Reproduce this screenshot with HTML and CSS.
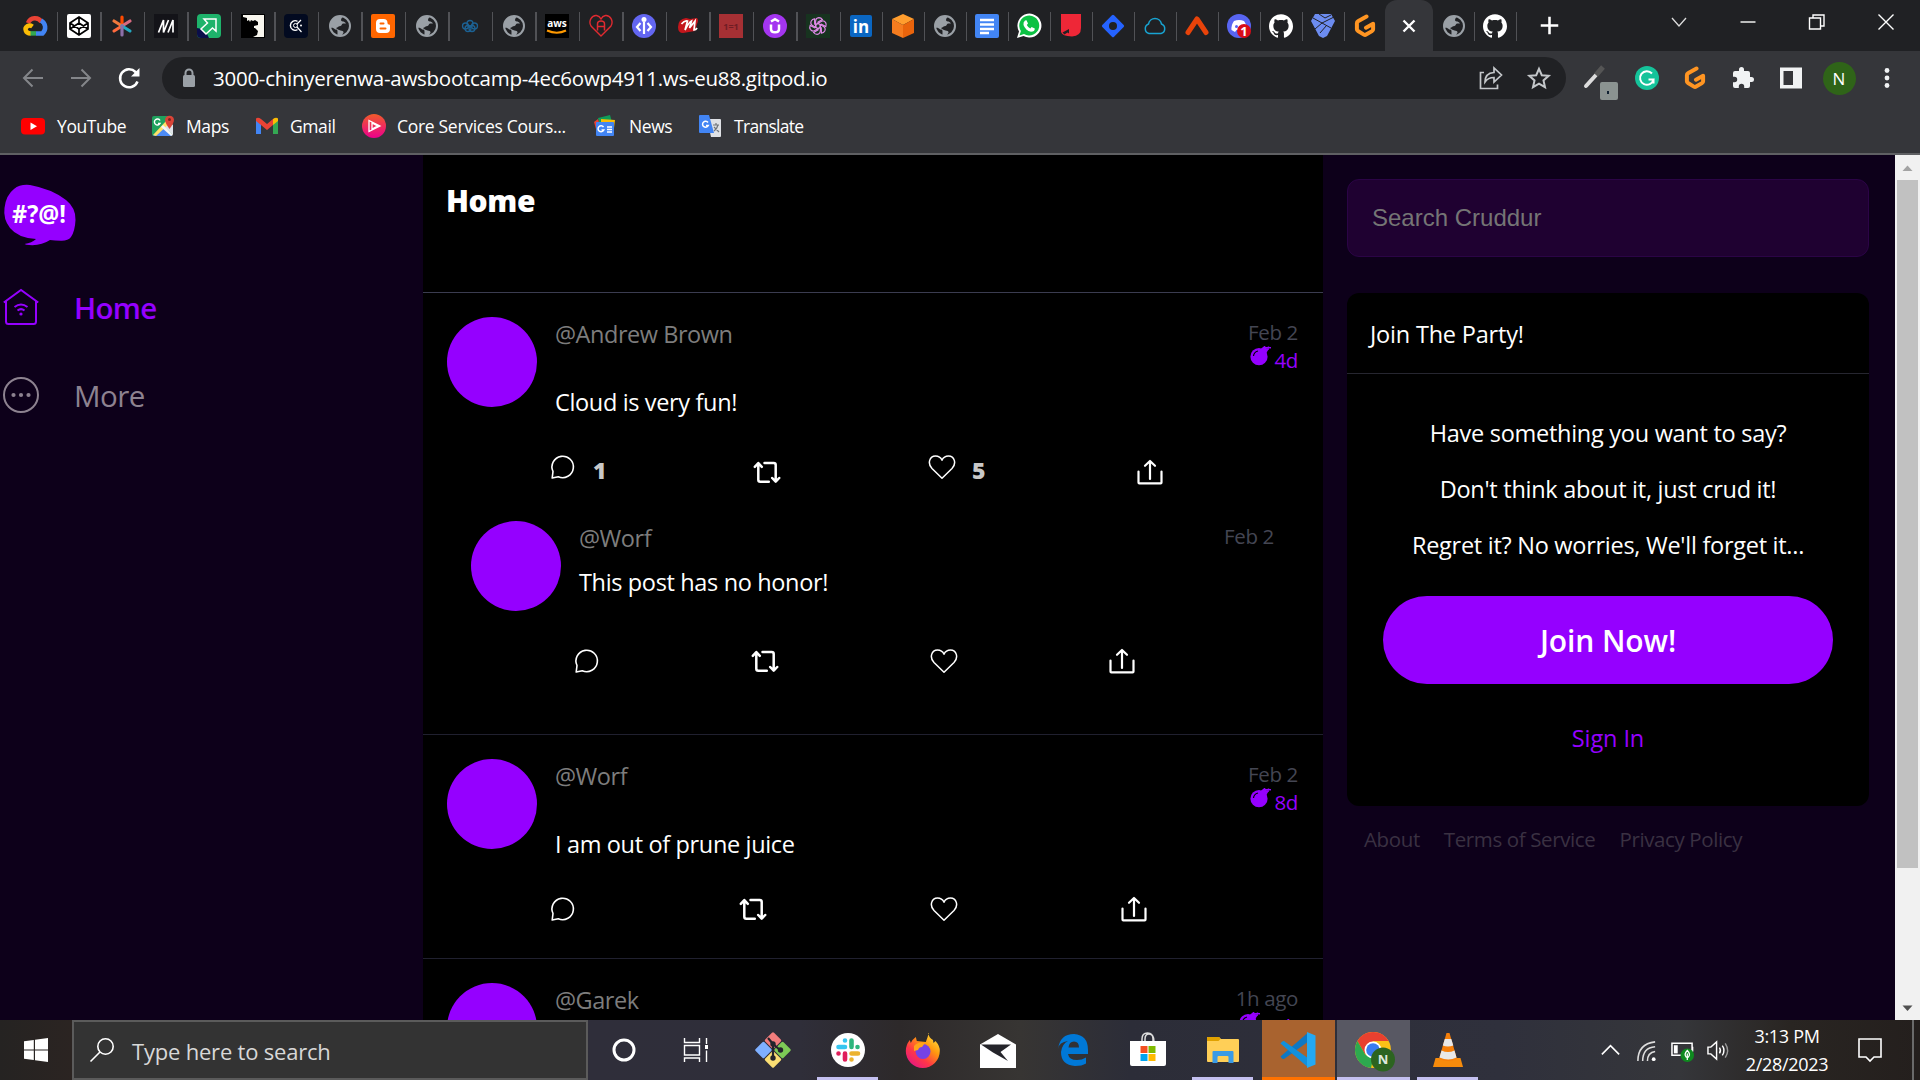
FILE: index.html
```html
<!DOCTYPE html>
<html lang="en">
<head>
<meta charset="utf-8">
<title>Cruddur</title>
<link rel="stylesheet" href="styles.css">
</head>
<body>
<svg class="defs" aria-hidden="true">
  <symbol id="globe" viewBox="0 0 24 24"><circle cx="12" cy="12" r="10" fill="#202124" stroke="#9aa0a6" stroke-width="2"/><path d="M12 2a10 10 0 0 0-9.800 12c2-.5 3.500 0 5 1.500 1.800 0 2.300.6 2.300 2v4.300c1.500.3 3.500.3 4.500 0 .2-2 1.500-2 1.500-3.500 0-1.300-1.500-1.500-3-1.800-2-.5-3.500-1.500-4.500-2.500 2-.4 2.500-2 4.500-2 1.500 0 1-2.500 2.500-2.500h3c-2-3-5-1.500-5-3.500 0-1.500 1.500-2.500 1.500-3.700z" fill="#9aa0a6"/></symbol>
  <symbol id="github" viewBox="0 0 24 24"><path fill="#fff" d="M12 .297c-6.630 0-12 5.373-12 12 0 5.303 3.438 9.800 8.205 11.385.6.113.82-.258.82-.577 0-.285-.01-1.040-.015-2.040-3.338.724-4.042-1.610-4.042-1.610C4.422 18.070 3.633 17.700 3.633 17.700c-1.087-.744.084-.729.084-.729 1.205.084 1.838 1.236 1.838 1.236 1.070 1.835 2.809 1.305 3.495.998.108-.776.417-1.305.76-1.605-2.665-.3-5.466-1.332-5.466-5.930 0-1.310.465-2.380 1.235-3.220-.135-.303-.54-1.523.105-3.176 0 0 1.005-.322 3.300 1.230.96-.267 1.980-.399 3-.405 1.020.006 2.040.138 3 .405 2.280-1.552 3.285-1.230 3.285-1.230.645 1.653.24 2.873.12 3.176.765.84 1.230 1.910 1.230 3.220 0 4.610-2.805 5.625-5.475 5.920.42.36.81 1.096.81 2.220 0 1.606-.015 2.896-.015 3.286 0 .315.21.69.825.57C20.565 22.092 24 17.592 24 12.297c0-6.627-5.373-12-12-12"/></symbol>
  <symbol id="gitpod" viewBox="0 0 24 24"><path d="M13.500 2.500 5 7.300a2.200 2.200 0 0 0-1.100 1.900v6a2.200 2.200 0 0 0 1.100 1.900l5.900 3.500a2.200 2.200 0 0 0 2.200 0l5.900-3.500a2.200 2.200 0 0 0 1.100-1.900V9.800L13 13.700" fill="none" stroke="#ff9522" stroke-width="4" stroke-linecap="round" stroke-linejoin="round"/></symbol>
  <symbol id="comment" viewBox="0 0 28 28"><path d="M3.200 25 4 18.500A10.700 10.700 0 1 1 9.300 23.700z" fill="none" stroke="#fff" stroke-width="1.600" stroke-linejoin="round"/></symbol>
  <symbol id="repost" viewBox="0 0 28 28"><path d="M1.800 8.800 5.300 5l3.500 3.800M5.300 5.500v16.200q0 2 2 2h8.500M11.500 5h9.200q2 0 2 2v16M19.200 20l3.500 3.700 3.500-3.700" fill="none" stroke="#fff" stroke-width="2.500" stroke-linecap="round" stroke-linejoin="round"/></symbol>
  <symbol id="heart" viewBox="0 0 28 28"><path d="M14 25.300 4 15.500C-.8 10.500 1.500 3 7.500 3c3.500 0 5.500 2 6.500 4.200C15 5 17 3 20.500 3c6 0 8.300 7.500 3.500 12.500z" fill="none" stroke="#fff" stroke-width="1.500" stroke-linejoin="round"/></symbol>
  <symbol id="share" viewBox="0 0 28 28"><path d="M2.500 13.500v11q0 .8.8.8h21.400q.8 0 .8-.8v-11M14 21V3M9 7.800 14 3l5 4.800" fill="none" stroke="#fff" stroke-width="2.200" stroke-linecap="round" stroke-linejoin="round"/></symbol>
  <symbol id="bomb" viewBox="0 0 22 20"><circle cx="9" cy="10.700" r="8.600" fill="#9500ff"/><path d="m12 2.800 2.500-2 3 2.800L15.500 7zM15 1.500l6 .3M16 1v3M18.500.5 18 4" fill="#9500ff" stroke="#9500ff" stroke-width="1.500"/><path d="M3.500 10q.5-4 4.500-5" fill="none" stroke="#000" stroke-width="1.200"/></symbol>
</svg>

<header class="chrome">
  <div class="tabs">
    <div class="tab tab-first"><svg viewBox="0 0 24 24"><path d="M5 9a7.500 7.500 0 0 1 13.500-1" fill="none" stroke="#ea4335" stroke-width="4.500"/><path d="M18 6.500a8 8 0 0 1 1.500 13H13" fill="none" stroke="#4285f4" stroke-width="4.500"/><path d="M7 19.400h6" stroke="#34a853" stroke-width="4.500"/><path d="M9.500 12.500C6 10 1.500 13 2.800 16.500 3.500 18.700 5 19.400 7.500 19.400" fill="none" stroke="#fbbc05" stroke-width="4.500"/></svg></div>
    <div class="tab wide"><svg viewBox="0 0 24 24"><rect width="24" height="24" rx="2" fill="#fff"/><path d="m12 3 9 6v6l-9 6-9-6V9zM3 9l9 6 9-6M3 15l9-6 9 6M12 3v6M12 15v6" fill="none" stroke="#000" stroke-width="1.700"/></svg></div>
    <div class="tab wide"><svg viewBox="0 0 24 24" stroke-width="3.200" stroke-linecap="round"><path d="M12 12V3" stroke="#ff4a00"/><path d="m12 12-8-5" stroke="#f0783c"/><path d="m12 12-8 5" stroke="#ff6a3d"/><path d="m12 12 8-5" stroke="#d86a80"/><path d="m12 12 8 5" stroke="#23a7c0"/><path d="M12 12v9" stroke="#8c6fa8"/></svg></div>
    <div class="tab wide"><svg viewBox="0 0 24 24"><rect width="24" height="24" fill="#131318"/><path d="M4.500 18.500 9.500 6v12.500L14.500 6M14 18.500 19 6v12.500" fill="none" stroke="#fff" stroke-width="1.700" stroke-linejoin="bevel"/></svg></div>
    <div class="tab wide"><svg viewBox="0 0 24 24"><rect width="24" height="24" rx="4" fill="#1eb36b"/><path d="M0 14q8 0 12 10H4q-4 0-4-4z" fill="#0b0e4a"/><path d="M7 5h12v12l-3.500-3L9 20l-5-5 6.500-6z" fill="#1eb36b" stroke="#fff" stroke-width="1.500"/></svg></div>
    <div class="tab wide"><svg viewBox="0 0 24 24"><rect width="24" height="24" fill="#000"/><path d="M2 1h21v22H12l4-2 1-4-3-3h-1v-2l4-1V8l-3-2-2 1-2-1-1 2-1-2-2 1V4L2 3z" fill="#f8f6ee"/></svg></div>
    <div class="tab wide"><svg viewBox="0 0 24 24"><rect width="24" height="24" rx="4" fill="#020a20"/><path d="M13.500 7.300a4.800 4.800 0 1 0 0 8.400" fill="none" stroke="#fff" stroke-width="1.400"/><circle cx="11.500" cy="11.500" r="2" fill="none" stroke="#fff"/><path d="m13 10 4-4M13 13l4.500 5" stroke="#fff" stroke-width="1.200"/><circle cx="17" cy="11.500" r="1" fill="#fff"/></svg></div>
    <div class="tab wide"><svg><use href="#globe"/></svg></div>
    <div class="tab wide"><svg viewBox="0 0 24 24"><rect width="24" height="24" rx="2" fill="#ff6600"/><path d="M9 5h3.500a4 4 0 0 1 4 4q0 1.500 1.500 1.500 1 0 1 1V15a4 4 0 0 1-4 4H9a4 4 0 0 1-4-4V9a4 4 0 0 1 4-4z" fill="#fff"/><path d="M9.500 9.500h3M9.500 14.500h5" stroke="#ff6600" stroke-width="2" stroke-linecap="round"/></svg></div>
    <div class="tab wide"><svg><use href="#globe"/></svg></div>
    <div class="tab wide"><svg viewBox="0 0 24 24" fill="none" stroke="#1c6193" stroke-width="1.300"><circle cx="12" cy="9.500" r="3"/><circle cx="7.500" cy="12" r="3"/><circle cx="16.500" cy="12" r="3"/><circle cx="10" cy="14.500" r="3"/><circle cx="14" cy="14.500" r="3"/></svg></div>
    <div class="tab wide"><svg><use href="#globe"/></svg></div>
    <div class="tab wide"><svg viewBox="0 0 24 24"><rect width="24" height="24" fill="#000"/><text x="12" y="13" text-anchor="middle" class="mark" font-size="10" fill="#fff">aws</text><path d="M2 16.500q10 4.500 19 0" fill="none" stroke="#ff9900" stroke-width="2"/></svg></div>
    <div class="tab wide"><svg viewBox="0 0 24 24"><path d="M12 22 2 12C-1 7 3 1 7.500 1.500 10 2 11 3 12 5c1-2 2-3 4.500-3.500C21 1 25 7 22 12z" fill="none" stroke="#e02a30" stroke-width="1.400"/><path d="M8.500 16.500V10q0-3 3.500-3t3.500 3v6.500M8.500 12.500h7" fill="none" stroke="#e02a30" stroke-width="1.500"/></svg></div>
    <div class="tab wide"><svg viewBox="0 0 24 24"><circle cx="12" cy="12" r="12" fill="#6366f1"/><circle cx="12" cy="5.500" r="2.500" fill="#fff"/><path d="M12 8v12M8.500 9l-3.500 4 3.500 4M15.500 9l3.500 4-3.500 4" fill="none" stroke="#fff" stroke-width="2.200"/></svg></div>
    <div class="tab wide"><svg viewBox="0 0 24 24"><path d="M2 13q0-8 8-9l4 1 7-1q2 2 0 6l-2 7-6 1-6 1q-5 0-5-6z" fill="#c4161c"/><path d="M5.500 10q3-4 6-3L9 16q4-8 6.500-9L13.500 14l5.500-7-1 9q2 0 3-2" fill="none" stroke="#fff" stroke-width="1.700"/></svg></div>
    <div class="tab wide"><svg viewBox="0 0 24 24"><rect width="24" height="24" fill="#a63034"/><text x="12" y="15.500" text-anchor="middle" class="mark" font-size="9" fill="#701d24">1=1</text></svg></div>
    <div class="tab wide"><svg viewBox="0 0 24 24"><circle cx="12" cy="12" r="12" fill="#a435f0"/><path d="M8 10.500V15q0 3.300 4 3.300t4-3.300v-4.500M8 7.500l4-2.300 4 2.300" fill="none" stroke="#fff" stroke-width="2.500"/></svg></div>
    <div class="tab wide"><svg viewBox="0 0 24 24"><rect width="24" height="24" fill="#17331f"/><g fill="none" stroke="#e08ae8" stroke-width="1.200"><path id="petal" d="M9.600 13.400V7.500q0-3.500 3.300-3.800 2.200 0 3.500 1.800L12 8.200v2.400"/><use href="#petal" transform="rotate(60 12 12)"/><use href="#petal" transform="rotate(120 12 12)"/><use href="#petal" transform="rotate(180 12 12)"/><use href="#petal" transform="rotate(240 12 12)"/><use href="#petal" transform="rotate(300 12 12)"/></g></svg></div>
    <div class="tab"><svg viewBox="0 0 24 24"><rect x="1" y="1" width="22" height="22" rx="2" fill="#0a66c2"/><text x="12" y="19" text-anchor="middle" class="mark" font-size="17" fill="#fff">in</text></svg></div>
    <div class="tab"><svg viewBox="0 0 24 24"><path d="m12 0 11 5-11 6L1 5z" fill="#ff9d2e"/><path d="m1 5 11 6v13L1 19z" fill="#f57c1f"/><path d="m23 5-11 6v13l11-5z" fill="#e9640c"/></svg></div>
    <div class="tab"><svg><use href="#globe"/></svg></div>
    <div class="tab"><svg viewBox="0 0 24 24"><rect width="24" height="24" rx="2" fill="#4285f4"/><path d="M5 6h14M5 10.500h14M5 15h14M5 19h9" stroke="#fff" stroke-width="2.300"/></svg></div>
    <div class="tab"><svg viewBox="0 0 24 24"><path d="M0 24 2 17.500A12 12 0 1 1 6.500 22z" fill="#fff"/><path d="m2.500 21.500 1.400-4.500A10 10 0 1 1 7 20z" fill="#0cc143"/><path d="m8 6.500 1.500-.3L11 9.500 9.800 11q1.200 2.500 3.500 3.400l1.300-1.400 3.200 1.500q0 3.300-3.800 3.300Q8.500 16.500 6.500 11 6 8 8 6.500z" fill="#fff"/></svg></div>
    <div class="tab"><svg viewBox="0 0 24 24"><path d="M2 0h20v14q0 8-9 8.500Q3 22 2 18z" fill="#ee2737"/><path d="M3.500 18.500 10 15v4.500l-1.500-1-3 2z" fill="#202124"/></svg></div>
    <div class="tab"><svg viewBox="0 0 24 24"><rect x="3.700" y="3.700" width="16.600" height="16.600" rx="1.500" transform="rotate(45 12 12)" fill="#2563ff"/><circle cx="12" cy="12" r="4" fill="#202124"/></svg></div>
    <div class="tab"><svg viewBox="0 0 24 24"><path d="M6 19.500a5 5 0 0 1-.5-9.500 6.600 6.600 0 0 1 13 0 5 5 0 0 1-.5 9.500z" fill="none" stroke="#18a4d2" stroke-width="1.500"/></svg></div>
    <div class="tab"><svg viewBox="0 0 24 24"><path d="M3 18.500 12 5l9 13.500" fill="none" stroke="#e8430a" stroke-width="5" stroke-linecap="round" stroke-linejoin="round"/></svg></div>
    <div class="tab"><svg viewBox="0 0 24 24"><circle cx="12" cy="12" r="12" fill="#5865f2"/><path d="M7 7q5-2 10 0 3 4 2.500 9l-3.500 2-1.500-2h-5L8 18l-3.500-2Q4 11 7 7z" fill="#fff"/><circle cx="9.500" cy="12.500" r="1.500" fill="#5865f2"/><circle cx="17" cy="17" r="7" fill="#d80c18"/><text x="17" y="22" text-anchor="middle" class="mark" font-size="13" fill="#fff">1</text></svg></div>
    <div class="tab"><svg><use href="#github"/></svg></div>
    <div class="tab"><svg viewBox="0 0 24 24"><path d="M4 0h16l4 7-8 15-4 2-4-2L0 7z" fill="#6c8cf0"/><path d="m2 4 9 5 12-6M11 9l-7 6M8 0l6 4 6-3M11 9l9 5M15.500 11.500 9 19" fill="none" stroke="#202124" stroke-width="1"/></svg></div>
    <div class="tab plain"><svg><use href="#gitpod"/></svg></div>
    <div class="tab active"><svg viewBox="0 0 24 24"><path d="m6.500 6.500 11 11m0-11-11 11" stroke="#fff" stroke-width="2.400"/></svg></div>
    <div class="tab late"><svg><use href="#globe"/></svg></div>
    <div class="tab"><svg><use href="#github"/></svg></div>
    <div class="new-tab"><svg viewBox="0 0 24 24"><path d="M12 2v20M2 12h20" stroke="#fff" stroke-width="2.900"/></svg></div>
    <div class="window-buttons">
      <svg viewBox="0 0 24 24"><path d="m5 8 7 8 7-8" fill="none" stroke="#ddd" stroke-width="1.300"/></svg>
      <svg viewBox="0 0 24 24"><path d="M4.500 12h15" stroke="#fff" stroke-width="1.400"/></svg>
      <svg viewBox="0 0 24 24"><path d="M4.500 8h11v11h-11zM8 8V5h11v11h-3.500" fill="none" stroke="#fff" stroke-width="1.400"/></svg>
      <svg viewBox="0 0 24 24"><path d="m4.500 4.500 15 15m0-15-15 15" stroke="#fff" stroke-width="1.400"/></svg>
    </div>
  </div>

  <div class="toolbar">
    <div class="tool"><svg viewBox="0 0 24 24"><path d="M22 12H3M11.500 3.500 3 12l8.500 8.500" fill="none" stroke="#84868a" stroke-width="2"/></svg></div>
    <div class="tool"><svg viewBox="0 0 24 24"><path d="M2 12h19M12.500 3.500 21 12l-8.500 8.500" fill="none" stroke="#84868a" stroke-width="2"/></svg></div>
    <div class="tool"><svg viewBox="0 0 24 24"><path d="M20.500 15.500A9 9 0 1 1 18.500 6l2 2" fill="none" stroke="#fff" stroke-width="2.500"/><path d="M22.500 2v8.500H14z" fill="#fff"/></svg></div>
    <div class="omnibox">
      <svg class="lock" viewBox="0 0 14 20"><rect x="1" y="7" width="12" height="12" rx="1.500" fill="#9aa0a6"/><path d="M3.500 8V5a3.500 3.500 0 0 1 7 0v3" fill="none" stroke="#9aa0a6" stroke-width="2"/></svg>
      <span class="url">3000-chinyerenwa-awsbootcamp-4ec6owp4911.ws-eu88.gitpod.io</span>
      <svg class="omni-icon" viewBox="0 0 24 24"><path d="M5 6.500H1.500v16h17v-4M6 16q0-9 9-9.500V2l7.500 7-7.500 7v-4.500q-6 0-9 4.500z" fill="none" stroke="#c4c7ca" stroke-width="1.700"/></svg>
      <svg class="omni-icon" viewBox="0 0 24 24"><path d="m12 2.800 2.800 6.400 6.900.6-5.200 4.600 1.500 6.800-6-3.600-6 3.600 1.500-6.800-5.200-4.600 6.900-.6z" fill="none" stroke="#c4c7ca" stroke-width="2"/></svg>
    </div>
    <div class="tool"><svg class="picker" viewBox="0 0 34 34"><path d="M4 20 14 9" stroke="#ddd" stroke-width="4" stroke-linecap="round"/><path d="m14 9 7-8" stroke="#555" stroke-width="5"/><rect x="18" y="16" width="18" height="18" rx="2" fill="#8b9391"/><rect x="25" y="25" width="2" height="3" fill="#123"/></svg></div>
    <div class="tool"><svg viewBox="0 0 24 24"><circle cx="12" cy="12" r="12" fill="#15c39a"/><path d="M17 7.500a6.800 6.800 0 1 0 1.500 6h-5M18.500 13v4.500" fill="none" stroke="#fff" stroke-width="2"/></svg></div>
    <div class="tool"><svg><use href="#gitpod"/></svg></div>
    <div class="tool"><svg viewBox="0 0 24 24"><path d="M20.500 11H19V7a2 2 0 0 0-2-2h-4V3.500a2.500 2.500 0 0 0-5 0V5H4a2 2 0 0 0-2 2v3.800h1.500a2.700 2.700 0 0 1 0 5.400H2V20a2 2 0 0 0 2 2h3.800v-1.500a2.700 2.700 0 0 1 5.400 0V22H17a2 2 0 0 0 2-2v-4h1.500a2.500 2.500 0 0 0 0-5z" fill="#f1f3f4"/></svg></div>
    <div class="tool"><svg viewBox="0 0 24 24"><path d="M1 1.500h22v21H1zM4.500 5v14H14V5z" fill="#f1f3f4" fill-rule="evenodd"/></svg></div>
    <div class="tool"><span class="profile">N</span></div>
    <div class="tool"><svg viewBox="0 0 24 24" fill="#f1f3f4"><circle cx="12" cy="4.500" r="2.400"/><circle cx="12" cy="12" r="2.400"/><circle cx="12" cy="19.500" r="2.400"/></svg></div>
  </div>

  <nav class="bookmarks">
    <span class="bookmark bm-youtube"><svg viewBox="0 0 24 24"><rect y="4" width="24" height="16.500" rx="4" fill="#f00"/><path d="m9.500 8.500 6.500 3.700-6.500 3.700z" fill="#fff"/></svg>YouTube</span>
    <span class="bookmark bm-maps"><svg viewBox="0 0 24 24"><rect x="1" y="2" width="20" height="20" rx="2" fill="#1fa15d"/><path d="m2 22 10-10 9 10z" fill="#4c8bf5"/><path d="m12 12 10 9V11l-5-4z" fill="#dfe3e8"/><path d="M2 21 16 6l3 3L5 22z" fill="#ffe168"/><path d="m12 11 10 10-2 1-10-9z" fill="#f5f5f5"/><path d="M9 6.500a3 3 0 1 0 0 3H7" fill="none" stroke="#fff" stroke-width="1.400"/><path d="M18.500 15Q14 9 14 5.500a4.600 4.600 0 0 1 9 0Q23 9 18.500 15z" fill="#db4437"/><circle cx="18.500" cy="5.500" r="1.500" fill="#7b231e"/></svg>Maps</span>
    <span class="bookmark bm-gmail"><svg viewBox="0 0 24 24"><path d="M1 6v14h5V10z" fill="#4285f4"/><path d="M18 10v10h5V6z" fill="#34a853"/><path d="M1 4.500Q3 3 6 5l6 5 6-5v6l-6 5-6-5-5-4z" fill="#ea4335"/><path d="M18 5q3-2 5-.5V7l-5 4z" fill="#fbbc04"/></svg>Gmail</span>
    <span class="bookmark bm-core"><svg viewBox="0 0 24 24"><defs><linearGradient id="plural" x2="0" y2="1"><stop stop-color="#f15b2a"/><stop offset="1" stop-color="#ec008c"/></linearGradient></defs><circle cx="12" cy="12" r="12" fill="url(#plural)"/><path d="m7 6.500 11 5.500-11 5.500zM10 9l5.500 3-5.500 3z" fill="none" stroke="#fff" stroke-width="1.300"/></svg>Core Services Cours...</span>
    <span class="bookmark bm-news"><svg viewBox="0 0 24 24"><path d="M5 4 17 1l2 7H6z" fill="#0f9d58"/><path d="m1 8 4-3 3 10H3z" fill="#ea4335"/><path d="m8 5 14 1-1 8H8z" fill="#fbbc04"/><rect x="3" y="8" width="18" height="14" rx="1" fill="#4285f4"/><path d="M10.500 13a3 3 0 1 0 .3 3H8.500M14 13h5M14 15.500h5M14 18h5" fill="none" stroke="#fff" stroke-width="1.500"/></svg>News</span>
    <span class="bookmark bm-translate"><svg viewBox="0 0 24 24"><path d="M9 5h13q1 0 1 1v16q0 1-1 1H13z" fill="#dfe1e5"/><path d="M1 2q0-1 1-1h9l5 18H2q-1 0-1-1z" fill="#4285f4"/><path d="M10 8.500a3 3 0 1 0 .3 3H8" fill="none" stroke="#fff" stroke-width="1.500"/><path d="M15 11h6M18 9v2M20 11q-1 4-4 6M16 13l5 5" fill="none" stroke="#70757a" stroke-width="1.200"/></svg>Translate</span>
  </nav>
</header>

<main class="app">
  <aside class="sidebar">
    <svg class="brand" viewBox="0 0 72 61"><path d="M26 0Q48 4 62 15q10 8 9.500 20-.5 11-4.500 17-3 4-10 3.800-6-.3-11-.8-9 6-21 5-3 0-4.500-1Q28 58 32 54 14 53 6 43-1 34 .5 23 2 10 10 4q6-5 16-4z" fill="#9500ff"/><text x="35" y="38" text-anchor="middle" textLength="54" lengthAdjust="spacingAndGlyphs" class="swear">#?@!</text></svg>
    <a class="nav-item current"><svg viewBox="0 0 36 36"><path d="M.8 13.500 18 1l17.200 12.500M3 12v20.500Q3 35 5.500 35h25q2.500 0 2.500-2.500V12" fill="none" stroke="#9500ff" stroke-width="2"/><path d="M11.500 18q6.500-5 13 0M14.500 21.500q3.500-2.800 7 0" fill="none" stroke="#9500ff" stroke-width="2"/><circle cx="18" cy="25" r="1.600" fill="#9500ff"/></svg>Home</a>
    <a class="nav-item"><svg viewBox="0 0 36 36"><circle cx="18" cy="18" r="17" fill="none" stroke="#8d8290" stroke-width="2"/><g fill="#8d8290"><circle cx="10.500" cy="18" r="2.100"/><circle cx="18" cy="18" r="2.100"/><circle cx="25.500" cy="18" r="2.100"/></g></svg>More</a>
  </aside>

  <section class="feed">
    <h1 class="feed-title">Home</h1>

    <article class="post with-reply">
      <div class="entry">
        <div class="avatar"></div>
        <div class="body">
          <div class="head"><span class="handle">@Andrew Brown</span><div class="times"><span>Feb 2</span><span class="expires"><svg><use href="#bomb"/></svg>4d</span></div></div>
          <p class="message">Cloud is very fun!</p>
          <div class="actions counted"><span><svg><use href="#comment"/></svg><b>1</b></span><span class="low"><svg><use href="#repost"/></svg></span><span><svg><use href="#heart"/></svg><b>5</b></span><span class="low"><svg><use href="#share"/></svg></span></div>
        </div>
      </div>
      <div class="entry reply">
        <div class="avatar"></div>
        <div class="body">
          <div class="head"><span class="handle">@Worf</span><div class="times"><span>Feb 2</span></div></div>
          <p class="message">This post has no honor!</p>
          <div class="actions"><span><svg><use href="#comment"/></svg></span><span><svg><use href="#repost"/></svg></span><span><svg><use href="#heart"/></svg></span><span><svg><use href="#share"/></svg></span></div>
        </div>
      </div>
    </article>

    <article class="post">
      <div class="entry">
        <div class="avatar"></div>
        <div class="body">
          <div class="head"><span class="handle">@Worf</span><div class="times"><span>Feb 2</span><span class="expires"><svg><use href="#bomb"/></svg>8d</span></div></div>
          <p class="message">I am out of prune juice</p>
          <div class="actions"><span><svg><use href="#comment"/></svg></span><span><svg><use href="#repost"/></svg></span><span><svg><use href="#heart"/></svg></span><span><svg><use href="#share"/></svg></span></div>
        </div>
      </div>
    </article>

    <article class="post">
      <div class="entry">
        <div class="avatar"></div>
        <div class="body">
          <div class="head"><span class="handle">@Garek</span><div class="times"><span>1h ago</span><span class="expires"><svg><use href="#bomb"/></svg>11h</span></div></div>
        </div>
      </div>
    </article>
  </section>

  <aside class="rail">
    <input class="search" type="text" placeholder="Search Cruddur">
    <div class="join">
      <h2 class="join-title">Join The Party!</h2>
      <div class="join-body">
        <p>Have something you want to say?</p>
        <p>Don't think about it, just crud it!</p>
        <p>Regret it? No worries, We'll forget it...</p>
        <a class="join-button">Join Now!</a>
        <a class="sign-in">Sign In</a>
      </div>
    </div>
    <footer class="links"><a>About</a><a>Terms of Service</a><a>Privacy Policy</a></footer>
  </aside>

  <div class="scrollbar">
    <svg viewBox="0 0 25 25"><path d="M7.500 16 12.500 10.500 17.500 16z" fill="#a3a3a3"/></svg>
    <div class="thumb"></div>
    <svg viewBox="0 0 25 25"><path d="M7.500 10.500 12.500 16 17.500 10.500z" fill="#505050"/></svg>
  </div>
</main>

<footer class="taskbar">
  <div class="start"><svg viewBox="0 0 24 24"><path d="M0 3.300 9.800 2v9.500H0zM11 1.800 24 0v11.500H11zM0 12.600h9.800V22L0 20.700zM11 12.600h13V24l-13-1.800z" fill="#fff"/></svg></div>
  <div class="task-search"><svg viewBox="0 0 24 24"><circle cx="15.500" cy="8.500" r="7.700" fill="none" stroke="#fff" stroke-width="1.600"/><path d="M10 14 .5 23.500" stroke="#fff" stroke-width="1.600"/></svg><span>Type here to search</span></div>
  <div class="tool-cell"><svg viewBox="0 0 24 24"><circle cx="12" cy="12" r="10" fill="none" stroke="#fff" stroke-width="3"/></svg></div>
  <div class="tool-cell"><svg viewBox="0 0 24 24"><path d="M.5 0v4.500h15V0M.5 7.500h15v9.500H.500zM.5 24v-4h15v4M22.500 0v6M22.500 12.500V24" fill="none" stroke="#fff" stroke-width="1.400"/><rect x="21" y="7" width="3" height="4" fill="#fff"/></svg></div>
  <div class="apps">
    <div class="app-cell"><svg viewBox="0 0 36 36"><g transform="rotate(45 18 18)"><rect x="5" y="5" width="12.500" height="12.500" rx="1.500" fill="#f27d7d"/><rect x="18.500" y="5" width="12.500" height="12.500" rx="1.500" fill="#7dcb56"/><rect x="18.500" y="18.500" width="12.500" height="12.500" rx="1.500" fill="#fbdf74"/><rect x="5" y="18.500" width="12.500" height="12.500" rx="1.500" fill="#7fb0ff"/></g><path d="M13 6l5 6v14M18 12l7 6" fill="none" stroke="#24242c" stroke-width="2.200"/><circle cx="18" cy="12" r="2.700" fill="#24242c"/><circle cx="18" cy="26" r="2.700" fill="#24242c"/><circle cx="25.500" cy="18" r="2.700" fill="#24242c"/></svg></div>
    <div class="app-cell running"><svg viewBox="0 0 36 36"><circle cx="18" cy="18" r="17" fill="#fff"/><g stroke-width="4.600" stroke-linecap="round"><path d="M15 8.500v0M8.500 15H15" stroke="#36c5f0"/><path d="M21.500 8.500V15M27.500 15v0" stroke="#2eb67d"/><path d="M21.500 21.500H28M21.500 27.500v0" stroke="#ecb22e"/><path d="M15 21.500v6M8.500 21.500v0" stroke="#e01e5a"/></g></svg></div>
    <div class="app-cell"><svg viewBox="0 0 36 36"><defs><linearGradient id="fox" x1="1" x2=".2" y2="1"><stop stop-color="#fff44f"/><stop offset=".4" stop-color="#ff980e"/><stop offset=".7" stop-color="#ff3647"/><stop offset="1" stop-color="#e31587"/></linearGradient></defs><path d="M23 1q1 5 5 7l.5 3 2-2q4.500 5 4.300 10a17 17 0 0 1-34 0q0-6 4-11l1 3q2-4 5-6l1 4 9 1q2-5 3-9z" fill="url(#fox)"/><circle cx="18" cy="19.500" r="7.500" fill="#7542e5"/><path d="M9 14q4-5 11-3l-3 4q-3 0-4 3l-4 1z" fill="#ffa31a"/></svg></div>
    <div class="app-cell"><svg viewBox="0 0 36 36"><path d="M0 12.500 18 2l18 10.500V36H0z" fill="#fff"/><path d="M1 12.500h30L20.500 20 28 29l-15-8.500z" fill="#25252b"/></svg></div>
    <div class="app-cell"><svg viewBox="0 0 36 36"><path d="M3 17Q5 2 19 2q14 1 14 16v4H13q1 6 9 6 5 0 9-2.500v6Q27 34 20 34 6 33 6 20q1-8 7-11-9 1-10 8zm10.500-1.500H24q0-6-5-6t-5.500 6z" fill="#0078d7" fill-rule="evenodd"/></svg></div>
    <div class="app-cell"><svg viewBox="0 0 36 36"><path d="M12 10V7q0-6 5.500-6T23 7v3M15 10V7q0-5 4-5 5 0 5 8" fill="none" stroke="#ddd" stroke-width="1.500"/><path d="M0 9h36v23q0 2-2 2H2q-2 0-2-2z" fill="#fff"/><path d="M10.500 14h7v7h-7z" fill="#f25022"/><path d="M18.500 14h7v7h-7z" fill="#7fba00"/><path d="M10.500 22h7v7h-7z" fill="#00a4ef"/><path d="M18.500 22h7v7h-7z" fill="#ffb900"/></svg></div>
    <div class="app-cell running"><svg viewBox="0 0 36 36"><path d="M2 6q0-1 1-1h11l2 2h17q1 0 1 1v21q0 1-1 1H3q-1 0-1-1z" fill="#ffcf57"/><path d="M2 6q0-1 1-1h11l1.500 2-2 2H2z" fill="#e0a100"/><path d="M7.500 31V20q0-1 1-1h19q1 0 1 1v11h-5v-6q0-1-1-1h-9q-1 0-1 1v6z" fill="#3a9be6"/></svg></div>
    <div class="app-cell alert"><svg viewBox="0 0 36 36"><path d="m27 0 8.500 3.500v29L27 36z" fill="#24a9f2"/><path d="M27 1.500v9L4 27q-2 .5-3.500-2.500z" fill="#0e78c4"/><path d="M27 34.500v-9L4 9Q2 8.500.5 11.500z" fill="#1390dc"/></svg></div>
    <div class="app-cell running focused"><svg viewBox="0 0 40 40"><circle cx="18" cy="18" r="18" fill="#fbc116"/><path d="M2.400 9a18 18 0 0 1 31.200 0H18L10.200 22.500z" fill="#e8402f"/><path d="M2.400 9 10.200 22.500 18 27l-2 9A18 18 0 0 1 2.400 9z" fill="#2da94f"/><circle cx="18" cy="18" r="8.500" fill="#fff"/><circle cx="18" cy="18" r="6.800" fill="#3a7cf0"/><circle cx="28" cy="27.500" r="12" fill="#2c6420"/><text x="28" y="32" text-anchor="middle" font-size="13" class="mark" fill="#dfe8dc">N</text></svg></div>
    <div class="app-cell running"><svg viewBox="0 0 36 36"><path d="M5.500 26h25L33 35H3z" fill="#f68b0c"/><path d="m16.500 1h3l7.500 26q-9 4-18 0z" fill="#f57f0a"/><path d="m14.800 7-2 6.500q5 2 10.500 0L21.300 7zM11.500 18.500l-2 7q9 4 17 0l-2-7q-6.500 3-13 0z" fill="#e8e8e8"/></svg></div>
  </div>
  <div class="tray">
    <div class="tray-cell"><svg viewBox="0 0 24 24"><path d="m3 16 9-9 9 9" fill="none" stroke="#fff" stroke-width="1.700"/></svg></div>
    <div class="tray-cell"><svg viewBox="0 0 24 24" fill="none" stroke="#ddd" stroke-width="1.600"><path d="M3 23Q3 5 21 3M8 23Q8 9 21 8M13 23q0-9 8-10"/><circle cx="19.500" cy="21" r="2" fill="#fff" stroke="none"/></svg></div>
    <div class="tray-cell"><svg viewBox="0 0 24 24"><path d="M1 4.500h21V17H1zM22.500 8v5" fill="none" stroke="#fff" stroke-width="1.600"/><path d="M3 6.500h4V15H3z" fill="#fff"/><circle cx="17" cy="17" r="7" fill="#0f8a1f"/><path d="M17 12q-4 4-1 7h2q3-3-1-7zM17 15v7" fill="none" stroke="#fff" stroke-width="1.300"/></svg></div>
    <div class="tray-cell"><svg viewBox="0 0 24 24" fill="none" stroke="#fff" stroke-width="1.500"><path d="M1 8.500h3L10 3v18l-6-5.500H1z"/><path d="M13 9q2 3 0 6M16 7q3.500 5 0 10"/><path d="M19 4.500q5 7.500 0 15" stroke="#999"/></svg></div>
    <div class="clock"><span>3:13 PM</span><span>2/28/2023</span></div>
    <div class="notice"><svg viewBox="0 0 24 24"><path d="M1 1h22v18h-7l-4 4-4-4H1z" fill="none" stroke="#fff" stroke-width="1.600"/></svg></div>
    <div class="peek"></div>
  </div>
</footer>
</body>
</html>
```
FILE: styles.css
```css
* { box-sizing: border-box; }

html, body {
  margin: 0;
  width: 1920px;
  height: 1080px;
  overflow: hidden;
}

body {
  display: flex;
  flex-direction: column;
  background: #000;
  font-family: "Open Sans", "Noto Sans", sans-serif;
  color: #fff;
}

svg { display: block; flex: none; overflow: visible; }
p, h1, h2 { margin: 0; font-weight: 400; }
.defs { display: none; }
.mark { font-family: "Open Sans", sans-serif; font-weight: 700; }

/* Browser chrome */
.chrome {
  flex: none;
  height: 155px;
  background: #35363a;
  border-bottom: 2px solid #5f6063;
}

.tabs {
  display: flex;
  height: 51px;
  background: #202124;
}

.tab {
  position: relative;
  display: flex;
  align-items: center;
  justify-content: center;
  flex: none;
  width: 42px;
}
.tab svg { width: 24px; height: 24px; }
.tab::after {
  content: "";
  position: absolute;
  right: -1px;
  top: 12px;
  width: 1.5px;
  height: 29px;
  background: #515256;
}
.tab.wide { width: 43.5px; }
.tab-first { width: 57px; padding-left: 13px; }
.tab.late { width: 41px; }
.tab.plain::after, .tab.active::after { display: none; }
.tab.active {
  width: 48px;
  margin-left: -1px;
  background: #35363a;
  border-radius: 12px 12px 0 0;
}

.new-tab { width: 66px; display: flex; align-items: center; justify-content: center; }
.new-tab svg { width: 21px; height: 21px; }

.window-buttons {
  display: flex;
  gap: 45px;
  margin-left: auto;
  padding: 10px 22px 0 0;
}
.window-buttons svg { width: 24px; height: 24px; }

.toolbar {
  display: flex;
  align-items: center;
  height: 54px;
  padding: 0 9px;
}
.tool { width: 48px; display: flex; justify-content: center; flex: none; }
.tool svg { width: 24px; height: 24px; }
.tool .picker { width: 34px; height: 34px; margin-top: 10px; }

.omnibox {
  display: flex;
  align-items: center;
  flex: 1;
  height: 42px;
  margin: 0 9px;
  padding: 0 15px 0 20px;
  background: #202124;
  border-radius: 21px;
}
.lock { width: 14px; height: 20px; }
.url { flex: 1; margin-left: 17px; font-size: 20.5px; letter-spacing: -0.26px; }
.omni-icon { width: 24px; height: 24px; margin-left: 24px; }

.profile {
  width: 33px;
  height: 33px;
  border-radius: 50%;
  background: #2f6418;
  text-align: center;
  font-size: 17px;
  line-height: 33px;
}

.bookmarks {
  display: flex;
  align-items: center;
  height: 41px;
  font-size: 17.5px;
  letter-spacing: -0.4px;
}
.bookmark { display: flex; align-items: center; flex: none; gap: 12px; }
.bookmark svg { width: 24px; height: 24px; }
.bm-youtube { width: 130px; margin-left: 21px; }
.bm-maps { width: 104px; gap: 11px; }
.bm-gmail { width: 107px; gap: 11px; }
.bm-core { width: 231px; gap: 11px; letter-spacing: -0.3px; }
.bm-news { width: 105px; }
.bm-translate { letter-spacing: -0.7px; }

/* Page */
.app { display: flex; height: 865px; background: #0d001a; }

.sidebar { width: 423px; padding: 30px 0 0 4px; }
.brand { width: 72px; height: 61px; }
.swear { font: 700 25px "Open Sans", sans-serif; fill: #fff; }

.nav-item {
  display: flex;
  align-items: center;
  gap: 35px;
  height: 88px;
  margin-left: -1px;
  font-size: 29.5px;
  letter-spacing: -0.5px;
  color: #8d8290;
}
.nav-item svg { width: 36px; height: 36px; }
.current { margin-top: 17px; font-weight: 600; letter-spacing: -0.7px; color: #9500ff; }

.feed { width: 900px; background: #000; overflow: hidden; }
.feed-title {
  height: 138px;
  padding: 25px 23px;
  border-bottom: 1px solid #3b3c50;
  font-size: 30px;
  font-weight: 800;
  line-height: 42px;
  letter-spacing: -0.4px;
}

.post { padding: 24px 24px 35px; border-bottom: 1px solid #20202f; }
.with-reply { padding-bottom: 59px; }
.entry { display: flex; gap: 18px; }
.avatar { flex: none; width: 90px; height: 90px; border-radius: 50%; background: #9500ff; }
.body { flex: 1; }

.head { display: flex; justify-content: space-between; height: 69px; }
.handle { font-size: 23.5px; line-height: 35px; letter-spacing: -0.45px; color: #7d7d7d; }
.times {
  display: flex;
  flex-direction: column;
  align-items: flex-end;
  padding: 1px 1px 0 0;
  font-size: 20.5px;
  line-height: 28px;
  letter-spacing: -0.35px;
  color: #444653;
}
.expires { display: flex; gap: 2px; color: #9500ff; }
.expires svg { width: 22px; height: 20px; }

.message { font-size: 23.5px; line-height: 32px; letter-spacing: -0.35px; }

.actions {
  display: grid;
  grid-template-columns: 190px 191px 190px 28px;
  margin: 34.5px 0 0.5px -6.5px;
}
.actions span { display: flex; }
.actions svg { width: 28px; height: 28px; }
.actions.counted { grid-template-columns: 204px 175px 208px 28px; }
.actions b {
  margin: 2px 0 0 16.5px;
  color: #c8c8c8;
  font-size: 23px;
  font-weight: 800;
  line-height: 31px;
}
.actions .low { padding-top: 5px; }

.reply { margin-top: 35px; padding: 0 24px; }
.reply .head { height: 45px; }
.reply .actions { grid-template-columns: 178px 179px 178px 28px; margin-top: 48.5px; }

.rail { width: 572px; padding: 24px 26px 0 24px; }
.search {
  display: block;
  width: 522px;
  height: 78px;
  padding: 0 24px;
  border: 1px solid #2b0446;
  border-radius: 12px;
  background: #1f0131;
  font: 24px "Liberation Sans", sans-serif;
}
.search::placeholder { color: #757575; }

.join { height: 513px; margin-top: 36px; border-radius: 12px; background: #000; }
.join-title {
  height: 81px;
  padding: 24px 23px;
  border-bottom: 1px solid #262630;
  font-size: 23.5px;
  line-height: 34px;
  letter-spacing: -0.2px;
}
.join-body { padding: 31px 36px 0; text-align: center; font-size: 23.5px; letter-spacing: -0.27px; }
.join-body p { line-height: 56px; }
.join-button {
  display: block;
  height: 88px;
  margin-top: 23px;
  border-radius: 45px;
  background: #9500ff;
  font-size: 30px;
  font-weight: 600;
  line-height: 90px;
  letter-spacing: -0.1px;
}
.sign-in { display: block; margin-top: 38px; color: #9500ff; line-height: 32px; letter-spacing: -0.1px; }

.links { display: flex; gap: 24px; padding: 19px 17px; color: #3a3142; font-size: 20.5px; line-height: 28px; letter-spacing: -0.38px; }

.scrollbar { width: 25px; background: #f1f1f1; display: flex; flex-direction: column; }
.scrollbar svg { width: 25px; height: 25px; }
.thumb { width: 21px; height: 688px; margin: 0 2px 127px; background: #c1c1c1; }

/* Desktop taskbar */
.taskbar {
  display: flex;
  height: 60px;
  background: linear-gradient(90deg, #252322 0, #2b2422 72px, #2f2e3a 590px, #2f2e39 800px, #2d292a 900px, #373533 1020px, #2c2d38 1130px, #2f303c 1500px, #35363a 1680px, #292522 1790px, #241f1d 1920px);
}
.start { width: 72px; padding: 18px 24px; }
.start svg { width: 24px; height: 24px; }
.task-search {
  display: flex;
  align-items: center;
  gap: 18px;
  width: 516px;
  padding: 0 16px;
  border: 2px solid #5b5b5b;
  background: #333;
  color: #d8d8d8;
  font-size: 22px;
  letter-spacing: -0.2px;
}
.task-search svg { width: 24px; height: 24px; }
.task-search span { padding-top: 2px; }
.tool-cell { width: 72px; display: flex; align-items: center; justify-content: center; }
.tool-cell svg { width: 24px; height: 24px; }

.apps { display: flex; margin-left: 3px; }
.app-cell { position: relative; width: 75px; display: flex; align-items: center; justify-content: center; }
.app-cell svg { width: 36px; height: 36px; }
.running::after, .alert::after {
  content: "";
  position: absolute;
  left: 7px;
  right: 7px;
  bottom: 0;
  height: 3px;
  background: #c4c0f0;
}
.alert { background: linear-gradient(#a9632f, #a9632f) 2px 0 / 73px 60px no-repeat; }
.alert::after { left: 2px; right: 0; background: #ff7200; }
.focused { background: linear-gradient(#585863, #585863) 2px 0 / 73px 60px no-repeat; }
.focused::after { left: 2px; right: 0; }
.focused svg { width: 40px; height: 40px; margin: 4px 0 0 5px; }

.tray { display: flex; align-items: stretch; margin-left: auto; }
.tray-cell { width: 36px; display: flex; align-items: center; justify-content: center; }
.tray-cell svg { width: 23px; height: 23px; }
.clock {
  display: flex;
  flex-direction: column;
  align-items: center;
  width: 96px;
  margin-left: 3px;
  margin-right: 1px;
  padding-top: 2px;
  font-size: 18px;
  line-height: 28px;
  letter-spacing: -0.3px;
}
.notice { width: 68px; display: flex; align-items: center; justify-content: center; }
.notice svg { width: 24px; height: 24px; }
.peek { width: 8px; margin-left: 8px; border-left: 2px solid #6a6a6a; }
```
